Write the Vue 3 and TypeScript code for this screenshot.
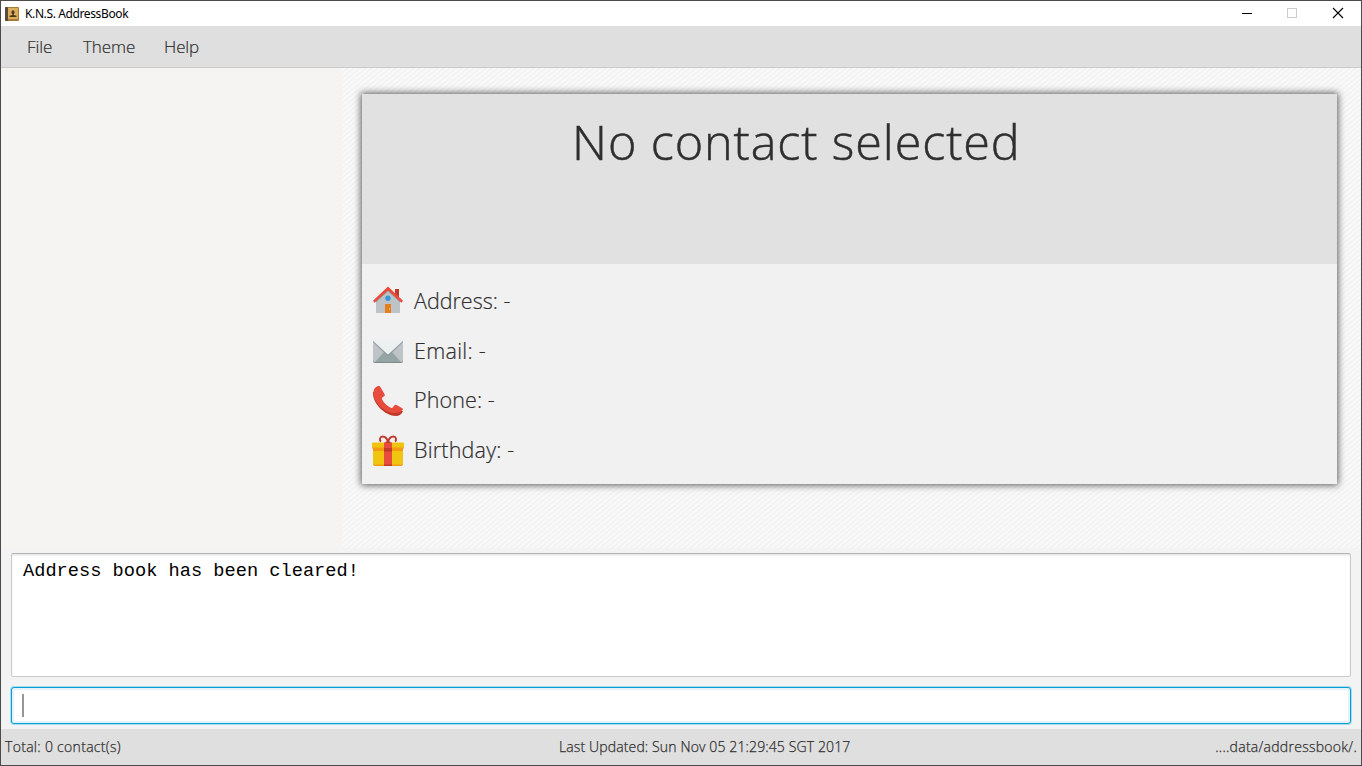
<script setup lang="ts">
interface Field { icon: string; label: string }
const menus: string[] = ['File', 'Theme', 'Help']
const fields: Field[] = [
  { icon: 'house', label: 'Address: -' },
  { icon: 'mail', label: 'Email: -' },
  { icon: 'phone', label: 'Phone: -' },
  { icon: 'gift', label: 'Birthday: -' },
]
</script>

<template>
  <div class="window">
    <header class="titlebar">
      <svg class="appicon" width="14" height="14" viewBox="0 0 14 14">
        <rect width="14" height="14" rx="1" fill="#a87c38" />
        <rect x="3" y="1" width="10" height="11" fill="#dcae5c" />
        <rect width="3" height="14" rx="1" fill="#5b4a3c" />
        <ellipse cx="8" cy="5.200" rx="1.500" ry="2" fill="#4b3a22" />
        <path d="M7.300 6h1.400v2l2.800.7V10h-7V8.700l2.800-.7z" fill="#4b3a22" />
      </svg>
      <span class="apptitle">K.N.S. AddressBook</span>
      <svg class="controls" width="110" height="20" viewBox="0 0 110 20" fill="none">
        <path d="M2 10.500h10" stroke="#000" />
        <rect x="47.500" y="5.500" width="9" height="9" stroke="#ccc" />
        <path d="M93 5l10 10M103 5l-10 10" stroke="#000" stroke-width="1.100" />
      </svg>
    </header>
    <nav class="menubar">
      <span v-for="m in menus" :key="m" class="menu" :class="m.toLowerCase()">{{ m }}</span>
    </nav>
    <main class="main">
      <aside class="list"></aside>
      <section class="detail">
        <svg class="texture" width="100%" height="100%">
          <defs>
            <pattern id="weave" width="6" height="5" patternUnits="userSpaceOnUse">
              <rect width="6" height="5" fill="#f9f9f9" />
              <path d="M-1.200 6L7.200-1M-1.200 1L1.200-1M4.800 6L7.200 4" stroke="#f2f2f2" stroke-width="1.500" />
            </pattern>
          </defs>
          <rect width="100%" height="100%" fill="url(#weave)" />
        </svg>
        <div class="card">
          <div class="head"><h1 class="name">No contact selected</h1></div>
          <ul class="fields">
            <li v-for="f in fields" :key="f.icon" class="field">
              <svg v-if="f.icon === 'house'" class="icon" width="32" height="32" viewBox="0 0 32 32">
                <path d="M23 4h4v10h-4z" fill="#c0392b" />
                <path d="M4 16L16 4.500 28 16v12H4z" fill="#bdc3c7" />
                <path d="M4 17.500L16 6.500l12 11V16L16 4.500 4 16z" fill="#95a5a6" />
                <path d="M16 1.500L1 15.800 2.600 17.800 16 5.500 29.400 17.800l1.600-2z" fill="#e74c3c" />
                <circle cx="16" cy="13.200" r="2.700" fill="#3498db" />
                <path d="M13 19h6v9h-6z" fill="#e67e22" /><path d="M17 23h1v2h-1z" fill="#f1c40f" />
              </svg>
              <svg v-else-if="f.icon === 'mail'" class="icon" width="32" height="32" viewBox="0 0 32 32">
                <rect x="1" y="5" width="30" height="23" rx="2" fill="#7f8c8d" />
                <rect x="1" y="5" width="30" height="22" rx="2" fill="#95a5a6" />
                <path d="M1 6v19q0 2 2 2L13 16zM31 6v19q0 2-2 2L19 16z" fill="#bdc3c7" />
                <path d="M2 6h28q1 0 1 1L16 21 1 7q0-1 1-1z" fill="#7f8c8d" />
                <path d="M2 5h28q1 0 1 1L16 19.800 1 6q0-1 1-1z" fill="#ecf0f1" />
              </svg>
              <svg v-else-if="f.icon === 'phone'" class="icon low" width="32" height="32" viewBox="0 0 32 32">
                <path d="M1 7C0 18 13 31 24 31c3 0 6-2 7-5l-5-1C17 25 8 17 7 8z" fill="#c0392b" />
                <path d="M6.500 1C4 1.300 1.500 4 1.500 7c0 10.500 10.500 21 21.500 21 3 0 6-1 7.800-3.500.3-.6.100-1-.5-1.300L24.500 20c-1-.5-1.600-.3-2.200.4l-1.600 2c-.6.600-1.300.7-2 .3-4.200-2.100-7-5-8.600-8.400-.4-.8-.2-1.400.5-2l1.600-1.100c.7-.5.8-1.200.4-2L8.500 2.200C8 1.300 7.500.9 6.500 1z" fill="#e74c3c" />
              </svg>
              <svg v-else class="icon low" width="32" height="32" viewBox="0 0 32 32">
                <path d="M16 7c-1-4-3-5.500-5.500-5.500S7 5 9 6.500M16 7c1-4 3-5.500 5.500-5.500S25 5 23 6.500" fill="none" stroke="#c0392b" stroke-width="1.900" />
                <rect x="1" y="10" width="30" height="21" rx="2" fill="#f39c12" />
                <rect x="1" y="10" width="30" height="19.500" rx="1.500" fill="#f1c40f" />
                <path d="M1 12h30v4H1z" fill="#f39c12" />
                <rect x="0" y="7.500" width="32" height="5.500" rx="1" fill="#f1c40f" />
                <path d="M0 12.500h32v1H0z" fill="#f39c12" />
                <path d="M12 7.500h8V31h-8z" fill="#e74c3c" /><path d="M12 13h8v3.500h-8zM12 29.500h8V31h-8z" fill="#c0392b" />
                <path d="M13.500 6.500h5V8h-5z" fill="#c0392b" />
              </svg>
              <span class="label" :class="f.icon">{{ f.label }}</span>
            </li>
          </ul>
        </div>
      </section>
    </main>
    <section class="console">
      <div class="result">Address book has been cleared!</div>
      <div class="command"><span class="caret"></span></div>
    </section>
    <footer class="status">
      <span class="total">Total: 0 contact(s)</span>
      <span class="updated">Last Updated: Sun Nov 05 21:29:45 SGT 2017</span>
      <span class="path">....data/addressbook/.</span>
    </footer>
  </div>
</template>

<style>
html, body { margin: 0; overflow: hidden; }
</style>
<style scoped>
* { box-sizing: border-box; }
.window { width: 1362px; height: 766px; border: 1px solid #4c4a4c; background: #f3f3f3; display: flex; flex-direction: column; font-family: "Open Sans", sans-serif; font-weight: 300; color: #2f2f2f; }
.titlebar { height: 25px; flex: none; background: #fff; display: flex; align-items: center; padding: 0 11px 0 4px; }
.appicon { flex: none; }
.apptitle { margin-left: 6px; font: 400 12px/24px "Noto Sans", sans-serif; letter-spacing: -.38px; color: #000; white-space: nowrap; }
.controls { margin-left: auto; margin-top: -1px; }
.menubar { height: 42px; flex: none; background: #dfdfdf; border-bottom: 1px solid #cacaca; display: flex; padding-left: 26px; line-height: 41px; font-size: 17px; letter-spacing: -.1px; -webkit-text-stroke: .2px #2f2f2f; }
.menu { white-space: nowrap; }
.file { width: 56px; }
.theme { width: 81px; }
.main { height: 480px; flex: none; display: flex; }
.list { width: 341px; background: #f5f4f2; }
.detail { flex: 1; display: grid; }
.texture, .card { grid-area: 1 / 1; }
.texture { display: block; }
.card { z-index: 1; margin: 26px 24px 64px 20px; background: #f1f1f1; box-shadow: 0 0 7px 1px rgba(0,0,0,.65); }
.head { height: 170px; background: #e1e1e1; padding-left: 210px; }
.name { margin: 0; padding-top: 13px; font-size: 48.500px; line-height: 68px; font-weight: 300; letter-spacing: .9px; white-space: nowrap; -webkit-text-stroke: .5px #2f2f2f; }
.fields { list-style: none; margin: 0; padding: 12px 0 0 10px; }
.field { height: 49.800px; display: flex; align-items: center; }
.icon { flex: none; }
.low { margin-top: 2px; }
.label { margin-left: 10px; font-size: 21.500px; line-height: 30px; white-space: nowrap; -webkit-text-stroke: .2px #2f2f2f; }
.mail { letter-spacing: .3px; }
.phone { letter-spacing: .1px; }
.gift { letter-spacing: .2px; }
.console { flex: 1; padding: 5px 10px; display: flex; flex-direction: column; gap: 10px; }
.result { height: 124px; border: 1px solid #c0c0c0; border-color: #b3b3b3 #c8c8c8 #cbcbcb; border-radius: 2px; background: #fff; box-shadow: inset 0 2px 3px -1px #ddd; padding: 7px 11px; font: 400 18.670px/21px "Liberation Mono", monospace; color: #000; }
.command { height: 37px; background: #fff; border: 1px solid #039ed3; border-radius: 3px; box-shadow: 0 0 0 1px #a9dcec, inset 0 0 0 2px #e3f3f9; padding: 6px 10px; }
.caret { display: block; width: 2px; height: 23px; background: #969696; }
.status { height: 36px; flex: none; background: #dfdfdf; display: flex; padding: 0 4px; line-height: 35px; font-size: 14px; white-space: nowrap; -webkit-text-stroke: .25px #2f2f2f; }
.total { width: 554px; letter-spacing: .3px; }
.updated { letter-spacing: .13px; }
.path { margin-left: auto; letter-spacing: .27px; }
</style>
